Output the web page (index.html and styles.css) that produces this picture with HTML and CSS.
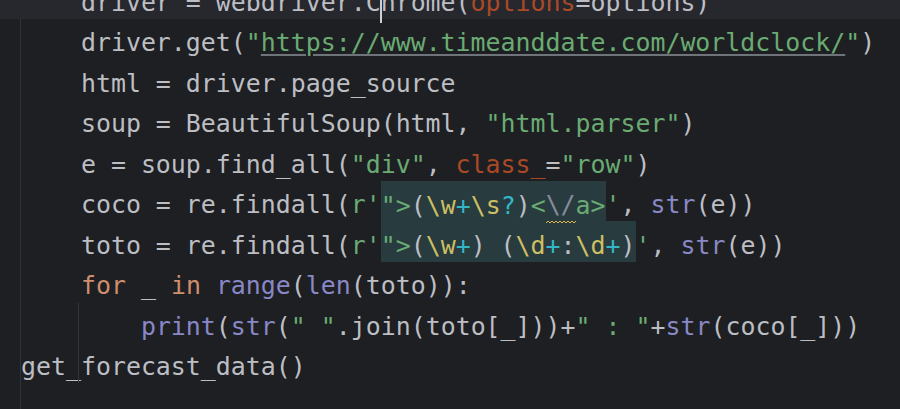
FILE: index.html
```html
<!DOCTYPE html>
<html lang="en">
<head>
  <meta charset="UTF-8">
  <meta name="viewport" content="width=device-width, initial-scale=1.0">
  <title>main.py</title>
  <link rel="stylesheet" href="styles.css">
</head>
<body>

<div class="editor">
  <div class="guide guide-def"></div>
  <div class="guide guide-for"></div>

  <div class="line current">    driver = webdriver.C<span class="caret"></span>hrome(<span class="kw-arg">options</span>=options)</div>
  <div class="line">    driver.get(<span class="str">"<span class="url">https://www.timeanddate.com/worldclock/</span>"</span>)</div>
  <div class="line">    html = driver.page_source</div>
  <div class="line">    soup = BeautifulSoup(html, <span class="str">"html.parser"</span>)</div>
  <div class="line">    e = soup.find_all(<span class="str">"div"</span>, <span class="kw-arg">class_</span>=<span class="str">"row"</span>)</div>
  <div class="line">    coco = re.findall(<span class="str">r'</span><span class="inj"><span class="str">"&gt;</span>(<span class="rx-esc">\w</span><span class="rx-q">+</span><span class="rx-esc">\s</span><span class="rx-q">?</span>)<span class="str">&lt;</span><span class="rx-redundant">\/<svg class="squiggle" viewBox="0 0 30 4"><polyline points="0,3 2,1 4,3 6,1 8,3 10,1 12,3 14,1 16,3 18,1 20,3 22,1 24,3 26,1 28,3 30,1"/></svg></span><span class="str">a&gt;</span></span><span class="str">'</span>, <span class="builtin">str</span>(e))</div>
  <div class="line">    toto = re.findall(<span class="str">r'</span><span class="inj"><span class="str">"&gt;</span>(<span class="rx-esc">\w</span><span class="rx-q">+</span>) (<span class="rx-esc">\d</span><span class="rx-q">+</span>:<span class="rx-esc">\d</span><span class="rx-q">+</span>)</span><span class="str">'</span>, <span class="builtin">str</span>(e))</div>
  <div class="line">    <span class="kw">for</span> _ <span class="kw">in</span> <span class="builtin">range</span>(<span class="builtin">len</span>(toto)):</div>
  <div class="line">        <span class="builtin">print</span>(<span class="builtin">str</span>(<span class="str">" "</span>.join(toto[_]))+<span class="str">" : "</span>+<span class="builtin">str</span>(coco[_]))</div>
  <div class="line">get_forecast_data()</div>
</div>

</body>
</html>
```

FILE: styles.css
```css
body {
  margin: 0;
  background-color: #1e1f22;
  overflow: hidden;
}
.editor {
  position: relative;
  box-sizing: border-box;
  min-height: calc(100vh + 21px);
  margin-top: -21px;
  font-family: "DejaVu Sans Mono", "Liberation Mono", monospace;
  font-size: 24.9px;
  color: #bcbec4;
}
.line {
  box-sizing: border-box;
  height: 40.44px;
  line-height: 33.44px;
  padding-top: 7px;
  padding-left: 21px;
  white-space: pre;
}
.line.current {
  background-color: #26282e;
}
.caret {
  display: inline-block;
  width: 2px;
  height: 36px;
  margin: 0 -1px;
  vertical-align: -12px;
  background-color: #ced0d6;
}

/* indent guides */
.guide {
  position: absolute;
  width: 1px;
  background-color: #313338;
}
.guide-def {
  left: 20px;
  top: 40px;
  bottom: 0;
}
.guide-for {
  left: 78px;
  top: 324px;
  height: 80px;
}

/* syntax colours */
.kw { color: #cf8e6d; }
.kw-arg { color: #aa4926; }
.str { color: #6aab73; }
.builtin { color: #8888c6; }
.url {
  text-decoration: underline;
  text-decoration-color: #6f737a;
  text-underline-offset: 3px;
}
.inj {
  background-color: #283b3e;
  padding: 9.5px 0 2px;
}
.rx-esc { color: #cdbf63; }
.rx-q { color: #33b7c6; }
.rx-redundant {
  position: relative;
  color: #868a9e;
}
.squiggle {
  position: absolute;
  left: 0;
  top: calc(100% + 1px);
  width: 30px;
  height: 4px;
  fill: none;
  stroke: #e0b84a;
  stroke-width: 1;
}
```
